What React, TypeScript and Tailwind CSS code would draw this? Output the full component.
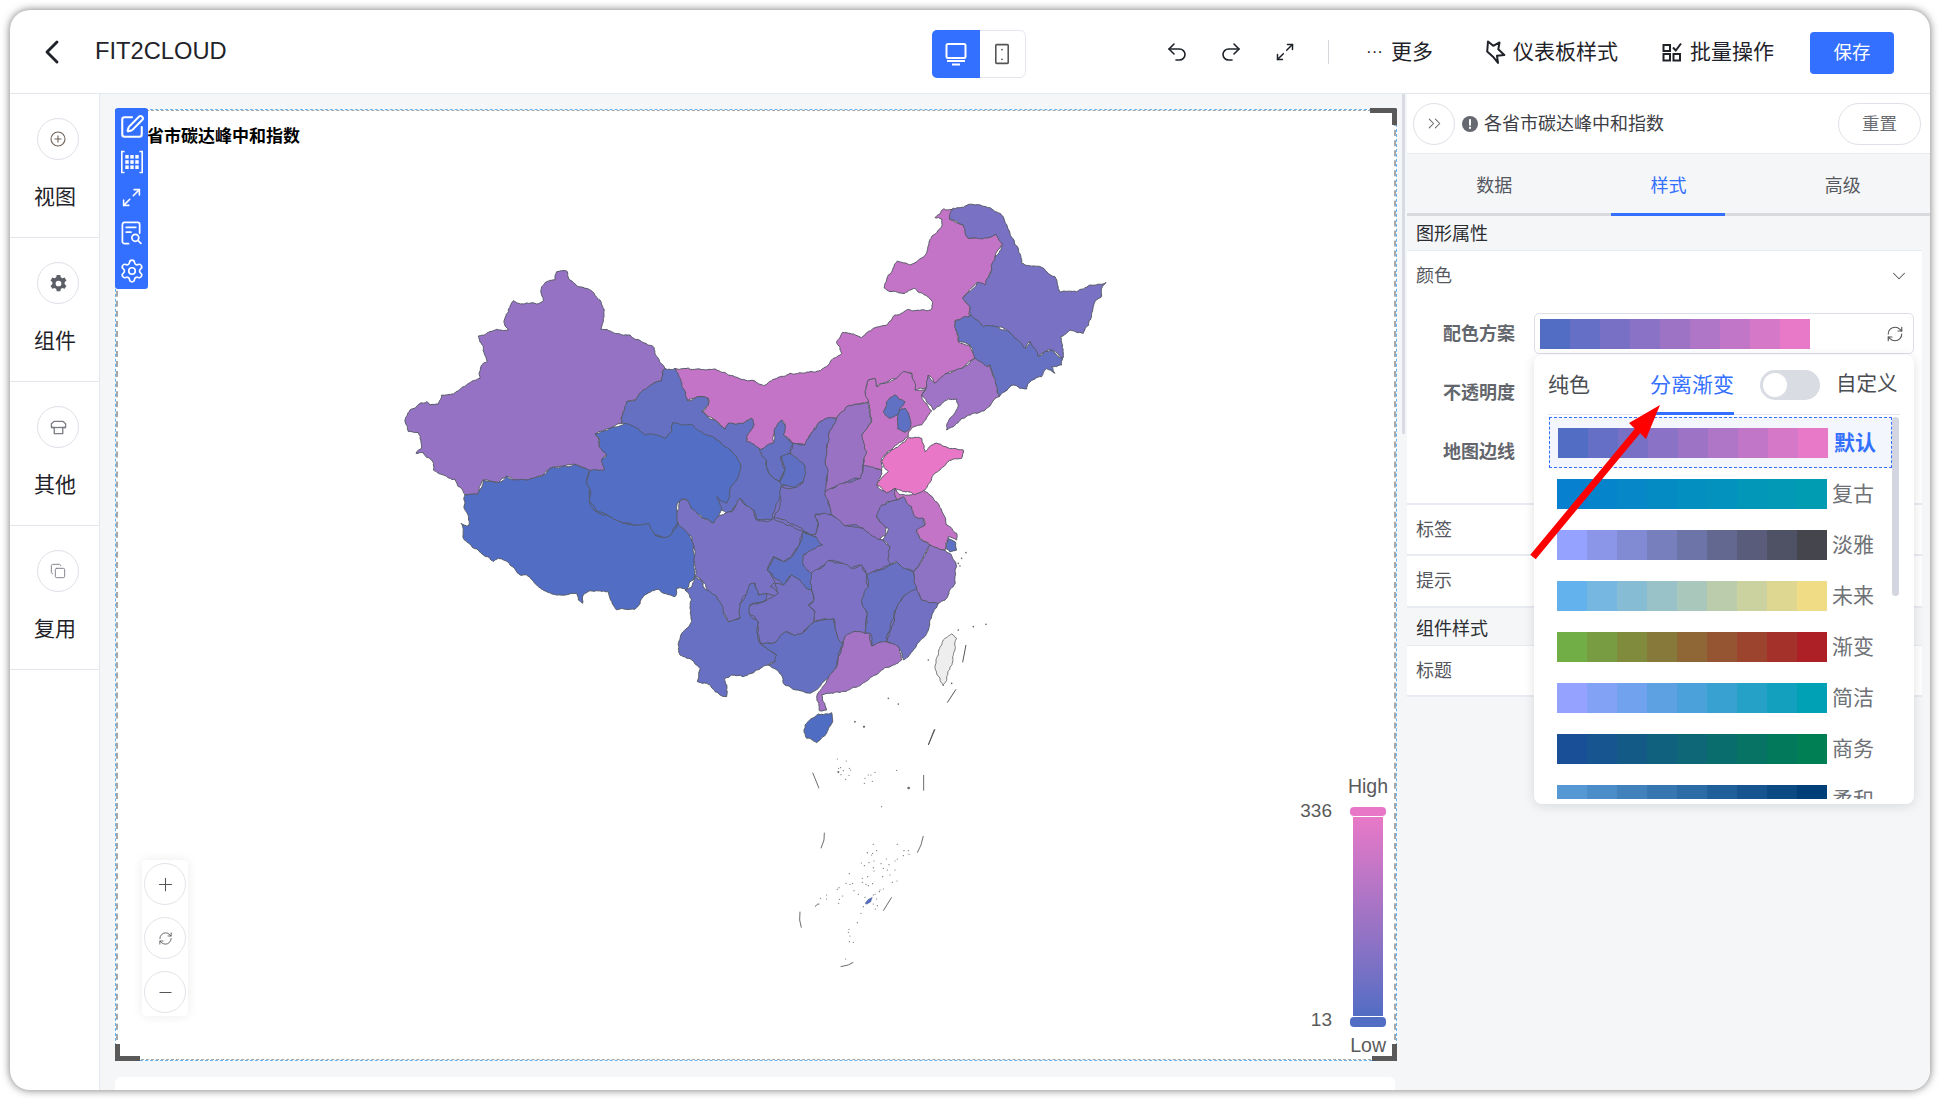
import React from "react";
import {
  ChevronDown, ChevronLeft, ChevronsRight, Copy, Maximize2, Minus, Plus, Redo2, RefreshCw, Settings, SquarePen, Undo2,
} from "lucide-react";

type Pt = [number, number];

function hash(x: number, y: number) {
  const s = Math.sin(Math.round(x) * 12.9898 + Math.round(y) * 78.233) * 43758.5453;
  return s - Math.floor(s);
}

function rec(a: Pt, b: Pt, out: Pt[]) {
  const dx = b[0] - a[0];
  const dy = b[1] - a[1];
  const len = Math.hypot(dx, dy);
  if (len < 7) {
    out.push(b);
    return;
  }
  const mx = (a[0] + b[0]) / 2;
  const my = (a[1] + b[1]) / 2;
  const k = (hash(mx, my) - 0.5) * Math.min(len * 0.25, 8);
  const m: Pt = [mx - (dy / len) * k, my + (dx / len) * k];
  rec(a, m, out);
  rec(m, b, out);
}

function wiggle(s: string) {
  const p = s.trim().split(/\s+/).map((v) => v.split(",").map(Number) as Pt);
  const out: Pt[] = [p[0]];
  for (let i = 0; i < p.length; i++) rec(p[i], p[(i + 1) % p.length], out);
  return out.map((q) => `${q[0].toFixed(1)},${q[1].toFixed(1)}`).join(" ");
}

const filler = "300,60 520,-30 620,50 650,300 700,400 800,400 800,500 700,640 500,740 330,680 150,480 110,350 200,250";
const westFiller = "520,640 600,620 640,700 800,760 860,800 870,930 700,950 520,900";
const z8: [string, string][] = [
  ["#9672c4", "470,35 500,33 510,60 530,78 555,85 578,95 600,120 613,150 610,185 603,208 640,218 690,225 725,245 760,260 775,295 795,325 787,335 785,362 755,375 725,395 708,420 680,425 665,490 630,505 585,522 597,535 598,560 620,585 605,598 613,630 570,632 530,615 490,618 450,625 430,645 385,660 340,660 320,648 295,668 250,660 232,703 195,705 175,680 165,658 130,645 100,630 95,600 70,578 48,580 65,565 55,518 25,515 15,480 30,450 60,430 80,425 90,435 115,432 125,405 160,402 190,380 240,355 245,315 262,305 250,260 235,228 290,208 325,210 313,190 340,122 370,132 410,132 430,122 425,80 435,68 465,60"],
  ["#516dc4", "195,705 232,703 250,660 295,668 320,648 340,660 385,660 430,645 450,625 490,618 530,615 570,632 560,660 570,690 568,725 590,755 625,768 660,785 700,795 745,790 765,825 790,832 812,825 832,790 855,800 880,850 885,935 880,960 870,965 860,990 830,985 825,1010 775,988 730,1010 705,1048 650,1050 630,1015 625,995 570,992 550,1005 548,1030 535,1020 530,1000 480,1005 440,995 410,975 380,945 360,945 330,915 295,895 280,905 250,885 215,860 190,835 183,790 205,798 205,770 192,740"],
];
const z8b: [string, string][] = [
  ["#526ec5", "585,522 630,505 680,490 715,505 735,525 770,525 795,535 815,515 818,488 845,495 875,492 920,525 950,540 990,570 1010,590 1022,625 1010,660 990,690 990,710 980,730 950,710 965,745 955,780 940,790 910,775 885,760 870,740 860,718 845,718 832,730 835,770 832,790 812,825 790,832 765,825 745,790 700,795 660,785 625,768 590,755 568,725 570,690 560,660 570,632 613,630 605,598 620,585 598,560 597,535"],
];
const im = "-195,520 -90,523 -35,540 0,552 45,558 70,572 110,550 150,535 210,530 250,520 280,490 305,475 290,440 308,412 330,415 365,428 400,400 440,390 465,360 500,345 575,342 578,322 555,300 525,280 495,295 450,290 432,278 445,240 472,198 510,210 555,182 580,120 605,95 605,72 585,68 610,42 640,40 628,72 670,90 685,130 745,128 768,118 788,148 765,185 755,225 735,270 712,262 668,310 690,335 688,365 645,378 655,440 690,450 705,490 665,520 620,535 585,565 565,540 558,580 525,585 515,535 490,530 470,550 410,575 405,550 385,555 375,590 385,622 340,630 320,635 290,670 240,680 210,720 195,750 160,745 130,720 135,690 125,675 105,700 100,745 60,765 20,740 20,725 42,690 35,670 10,685 -35,685 -45,703 -75,675 -115,650 -95,630 -95,610 -120,605 -158,617 -175,575";
const gansu = "15,-185 45,-185 65,-130 82,-88 120,-100 145,-95 145,-75 125,-55 165,-30 195,-2 205,-20 250,-20 275,-35 282,-15 260,20 260,35 300,57 320,90 325,125 358,155 378,110 365,75 390,75 435,105 435,155 365,170 358,205 345,238 335,270 290,270 280,240 240,205 215,245 200,250 100,150 0,60 -115,-20 -100,-85 -72,-90 -55,-115 -25,-135 5,-148 7,-175";
const z9: [string, string][] = [
  ["#7971c4", "628,72 640,40 700,28 760,45 790,65 810,115 835,160 845,205 900,215 945,245 960,292 1010,290 1050,270 1098,262 1085,280 1085,305 1065,320 1055,365 1030,415 990,405 962,425 968,490 935,465 915,470 895,485 870,440 855,460 825,430 800,405 770,395 730,395 690,360 690,335 668,310 712,262 735,270 755,225 765,185 788,148 768,118 745,128 685,130 670,90"],
  ["#6771c4", "645,378 688,365 690,360 730,395 770,395 800,405 825,430 855,460 870,440 895,485 915,470 935,465 968,490 965,510 935,515 945,535 920,520 905,545 865,565 860,582 820,570 795,590 778,605 750,510 740,515 705,490 690,450 655,440"],
  ["#9f73c5", "705,490 740,515 750,510 778,605 740,640 700,655 665,670 640,695 620,705 625,680 655,630 650,612 625,612 580,645 545,600 558,580 565,540 585,565 620,535 665,520"],
  ["#c474c6", "385,555 405,550 410,575 470,550 490,530 515,535 525,585 558,580 545,600 575,648 545,690 515,700 505,715 505,725 470,750 425,790 425,825 370,812 365,720 395,680 375,590"],
  ["#6071c4", "430,650 440,620 465,600 495,620 480,640 472,660 450,670"],
  ["#5d70c4", "478,645 495,640 510,670 510,700 495,712 472,700"],
  ["#9972c4", "290,670 320,635 385,622 395,680 365,720 380,770 367,815 362,850 310,865 255,890 262,840 255,800 265,720"],
  ["#7670c3", "240,680 275,668 290,670 265,720 255,800 262,840 255,890 275,960 225,958 235,985 225,1025 190,1005 150,985 100,970 118,940 122,875 165,878 190,860 195,815 150,775 160,745 195,750 210,720"],
  ["#6570c3", "58,765 100,745 105,700 125,675 135,690 130,720 160,745 150,775 122,785 135,825 120,860 85,830 80,800"],
  ["#5f70c4", "122,785 150,775 195,815 190,860 165,878 125,870 120,860 135,825"],
  ["#9571c4", "255,892 310,865 362,850 370,812 425,825 410,870 440,893 465,880 470,915 440,920 430,945 410,965 440,990 440,1020 420,1030 445,1060 440,1080 395,1040 370,1000 335,990 300,990 275,960 255,900"],
];
const south: [string, string][] = [
  ["#7871c4", "52,260 60,210 80,210 100,240 130,265 160,280 185,255 195,250 215,245 240,205 255,225 280,240 290,270 320,275 340,265 380,285 415,300 430,305 415,350 390,385 370,395 340,380 322,420 345,455 330,470 355,490 345,500 320,490 295,495 285,460 270,462 260,490 240,520 240,565 205,575 190,545 170,500 140,480 125,450 105,440 105,370 95,320 55,285"],
  ["#6770c3", "105,440 125,450 140,480 170,500 190,545 205,575 240,565 240,520 260,490 270,462 285,460 295,495 320,490 318,510 270,525 268,550 295,575 292,610 300,640 320,655 350,675 345,695 325,705 290,720 250,740 215,735 195,745 200,800 180,795 165,785 140,760 112,755 120,715 95,690 60,675 55,640 65,610 95,575 95,510 75,480 95,470"],
  ["#7771c4", "268,528 318,512 355,490 345,460 370,465 395,435 420,450 440,475 455,480 460,515 445,525 465,545 462,575 425,610 405,618 380,605 345,638 300,640 292,610 295,575 268,550"],
  ["#6670c3", "300,640 345,638 380,605 405,618 425,610 462,575 480,570 520,565 530,610 550,640 535,680 530,710 505,745 475,775 450,790 410,780 370,760 365,735 325,705 345,695 350,675 320,655"],
  ["#5e70c4", "430,305 470,322 488,345 430,375 430,405 455,430 457,480 440,475 420,450 395,435 370,465 345,445 322,420 340,380 370,395 390,385 415,350"],
  ["#8071c4", "465,255 490,250 515,255 545,280 580,290 610,295 640,320 668,330 690,350 690,405 620,435 605,405 575,415 545,400 505,392 495,405 455,430 430,405 430,375 488,345 470,322 430,305 465,315 475,285"],
  ["#7c71c4", "455,430 495,405 505,392 545,400 575,415 605,405 620,435 625,470 605,515 622,550 615,610 590,605 555,620 545,640 530,610 520,565 480,570 462,575 465,545 445,525 460,515"],
  ["#6870c3", "620,435 690,405 710,395 725,410 760,425 770,475 735,495 710,535 680,635 635,648 630,610 615,610 622,550 605,515 625,470"],
  ["#7170c3", "770,475 785,510 835,520 815,560 805,600 770,645 730,690 715,650 680,635 710,535 735,495"],
  ["#a473c5", "555,620 590,605 615,610 630,610 635,648 680,635 715,650 725,690 700,705 660,725 625,750 575,775 520,790 485,795 490,815 500,840 478,842 470,800 505,745 530,710 535,680 550,640"],
  ["#7f71c4", "710,210 730,200 755,230 765,260 790,265 795,285 770,300 780,325 810,345 790,385 775,410 760,425 725,410 710,395 690,405 690,350 668,330 685,295 650,260 665,225 690,215"],
  ["#8e72c4", "810,345 855,360 870,370 890,410 880,470 860,505 835,520 785,510 770,475 760,425 775,410 790,385"],
  ["#c474c6", "705,175 720,195 755,195 780,170 820,205 845,240 860,285 890,310 890,330 865,320 855,360 810,345 780,325 770,300 795,285 790,265 765,260 755,230 730,200 710,210"],
  ["#e878c7", "745,23 785,25 795,65 825,40 845,45 910,60 905,85 875,90 840,120 815,145 795,180 765,195 735,185 705,175 680,188 650,165 685,125 665,95 690,65"],
  ["#5f71c4", "865,325 885,335 890,360 870,365 857,355"],
  ["#506dc4", "435,885 475,852 515,848 518,875 500,910 470,938 440,925 432,900"],
];
const z10Lines = ["918,645 908,697", "888,778 862,818", "825,898 805,945"];
const z10Dots = [[685, 805], [715, 822], [585, 875], [612, 890], [805, 690], [875, 760], [940, 590], [978, 583], [895, 600], [905, 385], [895, 400], [900, 408], [918, 368]];
const z11Lines = ["98,218 105,235 117,265", "431,225 431,272", "133,398 132,420 123,445", "430,408 423,435 412,458", "335,592 310,632", "60,635 59,660 64,683", "182,800 205,795 220,787", "463,88 445,135", "105,620 112,613 118,612"];
const z11Dots = [[224, 66], [252, 80, 3], [172, 177], [199, 183], [176, 205], [182, 203], [208, 205], [175, 216, 3], [190, 212], [212, 210], [183, 224], [207, 226], [197, 238], [265, 225], [285, 217], [273, 225], [255, 235], [277, 244], [253, 250], [350, 211], [386, 264, 4], [305, 320], [280, 433], [352, 433], [290, 452], [278, 460], [275, 465], [262, 458], [372, 452], [385, 452], [370, 467], [387, 463], [345, 483], [352, 477], [253, 497], [244, 489], [267, 488], [282, 483], [303, 491], [319, 477], [327, 494], [310, 505], [280, 503], [282, 513], [322, 510], [345, 510], [330, 525], [308, 530], [263, 530], [208, 521], [247, 535], [247, 547], [258, 553], [265, 557], [278, 551], [337, 547], [351, 543], [177, 563], [172, 568], [198, 550], [210, 553], [218, 550], [222, 572], [235, 583], [188, 588], [140, 585], [140, 597], [122, 595], [178, 598], [176, 610], [300, 570], [310, 567], [298, 575], [285, 583], [280, 585], [255, 592], [290, 597], [280, 612], [292, 617], [286, 627], [250, 620], [243, 640], [232, 668], [207, 688], [205, 697], [210, 708], [208, 725], [220, 727], [197, 777]];

function Shape({ fill, pts }: { fill: string; pts: string }) {
  return <polygon points={wiggle(pts)} fill={fill} stroke="#555a66" strokeWidth={3} strokeLinejoin="round" />;
}

function ChinaMap() {
  const T8 = "translate(400 260) scale(0.3333)";
  const T9 = "translate(740 195) scale(0.3333)";
  const T10 = "translate(660 430) scale(0.3333)";
  const T11 = "translate(780 700) scale(0.3333)";
  return (
    <svg viewBox="400 190 720 800" className="absolute left-[284px] top-[80px] h-[800px] w-[720px]">
      <g transform={T10}>
        <polygon points={filler} fill="#7a71c4" />
      </g>
      <g transform={T8}>
        <polygon points={westFiller} fill="#516dc4" />
        {z8.map((s, i) => <Shape key={i} fill={s[0]} pts={s[1]} />)}
      </g>
      <g transform={T9}>
        <Shape fill="#c474c6" pts={im} />
      </g>
      <g transform={T10}>
        <Shape fill="#6570c3" pts={gansu} />
      </g>
      <g transform={T8}>
        {z8b.map((s, i) => <Shape key={i} fill={s[0]} pts={s[1]} />)}
      </g>
      <g transform={T9}>
        {z9.map((s, i) => <Shape key={i} fill={s[0]} pts={s[1]} />)}
      </g>
      <g transform={T10}>
        {south.map((s, i) => <Shape key={i} fill={s[0]} pts={s[1]} />)}
        <polygon points={wiggle("828,690 850,630 875,612 890,625 878,680 860,740 850,768 840,745 825,710")} fill="#eeeeee" stroke="#777777" strokeWidth={3} />
        {z10Lines.map((l, i) => <polyline key={i} points={l} fill="none" stroke="#555555" strokeWidth={3} />)}
        {z10Dots.map((d, i) => <circle key={i} cx={d[0]} cy={d[1]} r={2.5} fill="#666666" />)}
      </g>
      <g transform={T11}>
        {z11Lines.map((l, i) => <polyline key={i} points={l} fill="none" stroke="#555555" strokeWidth={2.6} />)}
        {z11Dots.map((d, i) => <circle key={i} cx={d[0]} cy={d[1]} r={d[2] ?? 1.7} fill="#666666" />)}
        <polygon points="255,610 265,598 277,592 272,606 260,613" fill="#516dc4" stroke="#555a66" strokeWidth={1} />
      </g>
    </svg>
  );
}

function lerpColors(from: number[], to: number[]) {
  return Array.from({ length: 9 }, (_, i) =>
    `rgb(${from.map((v, c) => Math.round(v + ((to[c] - v) * i) / 8)).join(",")})`,
  );
}

const DEFAULT_BAR = lerpColors([0x51, 0x6d, 0xc4], [0xe8, 0x79, 0xc8]);
const PALETTES = [
  { name: "复古", colors: lerpColors([0x07, 0x80, 0xcf], [0x00, 0x9d, 0xb2]) },
  { name: "淡雅", colors: lerpColors([0x95, 0xa2, 0xff], [0x45, 0x45, 0x4e]) },
  { name: "未来", colors: lerpColors([0x63, 0xb2, 0xee], [0xef, 0xdc, 0x85]) },
  { name: "渐变", colors: lerpColors([0x71, 0xae, 0x46], [0xac, 0x20, 0x26]) },
  { name: "简洁", colors: lerpColors([0x95, 0xa2, 0xff], [0x00, 0xa0, 0xb5]) },
  { name: "商务", colors: lerpColors([0x19, 0x4f, 0x97], [0x00, 0x7f, 0x54]) },
  { name: "柔和", colors: lerpColors([0x56, 0x98, 0xd3], [0x00, 0x3f, 0x78]) },
];

function Swatch({ colors }: { colors: string[] }) {
  return (
    <div className="flex h-[30px] w-[270px] shrink-0">
      {colors.map((c, i) => (
        <div key={i} className="h-full w-[30px]" style={{ backgroundColor: c }} />
      ))}
    </div>
  );
}

function OtherIcon() {
  return (
    <svg viewBox="0 0 18 18" className="h-[17px] w-[17px]" fill="none" stroke="#7a7d85" strokeWidth="1.4">
      <path d="M4.500 2.500h9l3 2.500v4h-3v6.500h-9V9h-3V5z" strokeLinejoin="round" />
      <path d="M1.500 9h15" />
    </svg>
  );
}

function NavItem({ label, icon }: { label: string; icon: React.ReactNode }) {
  return (
    <div className="flex h-[144px] flex-col items-start border-b border-[#e4e7ed] pt-[24px]">
      <div className="ml-[27px] flex h-[42px] w-[42px] items-center justify-center rounded-full border border-[#dfe1e8]">{icon}</div>
      <div className="ml-[24px] mt-[22px] text-[21px] leading-[30px] text-[#1f2329]">{label}</div>
    </div>
  );
}

function GridIcon() {
  return (
    <svg viewBox="0 0 24 24" className="h-[24px] w-[24px]" fill="none" stroke="white" strokeWidth="1.6">
      <path d="M4.500 1.500H1.800v21h2.700M19.500 1.500h2.700v21h-2.700" />
      <g fill="white" stroke="none">
        <rect x="5.300" y="5" width="3.400" height="3.600" /><rect x="10.300" y="5" width="3.400" height="3.600" /><rect x="15.300" y="5" width="3.400" height="3.600" />
        <rect x="5.300" y="10.200" width="3.400" height="3.600" /><rect x="10.300" y="10.200" width="3.400" height="3.600" /><rect x="15.300" y="10.200" width="3.400" height="3.600" />
        <rect x="5.300" y="15.400" width="3.400" height="3.600" /><rect x="10.300" y="15.400" width="3.400" height="3.600" /><rect x="15.300" y="15.400" width="3.400" height="3.600" />
      </g>
    </svg>
  );
}

function DocSearchIcon() {
  return (
    <svg viewBox="0 0 24 26" className="h-[25px] w-[23px]" fill="none" stroke="white" strokeWidth="1.800" strokeLinecap="round">
      <path d="M9 23.500H4.500a2 2 0 0 1-2-2v-18a2 2 0 0 1 2-2h14a2 2 0 0 1 2 2v9" />
      <path d="M6.500 6.500h10M6.500 11.500h5" />
      <circle cx="16" cy="17.500" r="3.600" />
      <path d="M18.800 20.300l3 3" />
    </svg>
  );
}

function FormRow({ label, children }: { label: string; children?: React.ReactNode }) {
  return (
    <div className="flex h-[59px] items-center">
      <div className="w-[108px] pt-[2px] text-right text-[18px] font-bold text-[#63666c]">{label}</div>
      <div className="relative ml-[19px]">{children}</div>
    </div>
  );
}

function Popover() {
  return (
    <div className="absolute left-0 top-[42px] z-20 h-[449px] w-[380px] rounded-[8px] bg-white shadow-[0_2px_12px_rgba(0,0,0,0.12)]">
      <div className="mx-[14px] flex h-[60px] items-center border-b border-[#e4e7ed]">
        <span className="text-[21px] text-[#4a4d52]">纯色</span>
        <div className="relative ml-[60px] flex h-full items-center">
          <span className="text-[21px] text-[#3370ff]">分离渐变</span>
          <div className="absolute bottom-[-1px] left-0 h-[3px] w-full bg-[#3370ff]" />
        </div>
        <div className="ml-[26px] flex h-[30px] w-[60px] items-center rounded-full bg-[#d9dce3] pl-[3px]">
          <div className="h-[24px] w-[24px] rounded-full bg-white" />
        </div>
        <span className="ml-[16px] whitespace-nowrap text-[20.5px] text-[#4a4d52]">自定义</span>
      </div>
      <div className="relative ml-[15px] mt-[2px] h-[382px] w-[350px] overflow-hidden">
        <div className="flex h-[51px] w-[343px] items-center border border-dashed border-[#3370ff] bg-[#f3f6fc] pl-[8px]">
          <Swatch colors={DEFAULT_BAR} />
          <span className="ml-[6px] text-[21px] font-bold text-[#3370ff]">默认</span>
        </div>
        {PALETTES.map((p) => (
          <div key={p.name} className="flex h-[51px] w-[343px] items-center pl-[8px]">
            <Swatch colors={p.colors} />
            <span className="ml-[5px] text-[21px] text-[#6e7176]">{p.name}</span>
          </div>
        ))}
        <div className="absolute right-0 top-0 h-[179px] w-[7px] rounded-full bg-[#d3d6e0]" />
      </div>
    </div>
  );
}

function Arrow() {
  return (
    <svg viewBox="1520 400 150 165" className="pointer-events-none absolute left-[1510px] top-[390px] z-30 h-[165px] w-[150px]">
      <polygon
        points="1530.300,554.800 1634.800,428.800 1629,423 1660,405 1646,439 1640.200,433.200 1535.700,559.200"
        fill="#ff0000"
      />
    </svg>
  );
}

function Panel() {
  return (
    <div className="flex w-[523px] flex-col bg-[#f5f6f8]">
      <div className="flex h-[60px] items-center border-b border-[#e9ebef] bg-white">
        <div className="ml-[6px] flex h-[42px] w-[42px] items-center justify-center rounded-full border border-[#dfe1e8]">
          <ChevronsRight size={21} strokeWidth={1.200} color="#666" />
        </div>
        <svg viewBox="0 0 16 16" className="ml-[7px] h-[16px] w-[16px]">
          <circle cx="8" cy="8" r="8" fill="#666a70" />
          <rect x="7" y="3.200" width="2" height="6.400" fill="white" />
          <rect x="7" y="10.800" width="2" height="2" fill="white" />
        </svg>
        <span className="ml-[6px] pt-[2px] text-[18px] text-[#3d4045]">各省市碳达峰中和指数</span>
        <div className="ml-[174px] flex h-[42px] w-[83px] items-center justify-center rounded-full border border-[#dfe1e8] pt-[2px] text-[17.500px] text-[#6a6d73]">重置</div>
      </div>
      <div className="grid h-[62px] grid-cols-3 border-b-[3px] border-[#d9dadd] text-[18px]">
        <div className="flex items-center justify-center pt-[5px] text-[#55585e]">数据</div>
        <div className="flex justify-center">
          <div className="mb-[-3px] flex w-[114px] items-center justify-center border-b-[3px] border-[#3370ff] pt-[5px] text-[#3370ff]">样式</div>
        </div>
        <div className="flex items-center justify-center pt-[5px] text-[#55585e]">高级</div>
      </div>
      <div className="flex h-[34px] items-center pl-[9px] pt-[2px] text-[18px] text-[#2b2d31]">图形属性</div>
      <div className="w-[515px] border-t border-[#e9ebf2] bg-white text-[18px] text-[#55585e]">
        <div className="flex h-[50px] items-center justify-between pl-[9px] pr-[12px]">
          <span>颜色</span>
          <ChevronDown size={22} strokeWidth={1.100} color="#555" />
        </div>
        <div className="h-[204px] border-b-2 border-[#e9ebf2] pt-[3px]">
          <FormRow label="配色方案">
            <div className="flex h-[41px] w-[380px] items-center justify-between rounded-[5px] border border-[#dcdfe6] pl-[5px] pr-[9px]">
              <Swatch colors={DEFAULT_BAR} />
              <RefreshCw size={18} strokeWidth={1.500} color="#555" />
            </div>
            <Popover />
          </FormRow>
          <FormRow label="不透明度" />
          <FormRow label="地图边线" />
        </div>
        <div className="flex h-[51px] items-center border-b-2 border-[#e9ebf2] pl-[9px] pt-[2px]">标签</div>
        <div className="flex h-[52px] items-center border-b-2 border-[#e9ebf2] pl-[9px]">提示</div>
      </div>
      <div className="flex h-[38px] w-[515px] items-center border-b border-[#e9ebf2] pl-[9px] pt-[5px] text-[18px] text-[#2b2d31]">组件样式</div>
      <div className="flex h-[51px] w-[515px] items-center border-b-2 border-[#e9ebf2] bg-white pl-[9px] pt-[1px] text-[18px] text-[#55585e]">标题</div>
    </div>
  );
}

function Widget() {
  return (
    <div className="relative h-[952px] w-[1282px] border border-dashed border-[#63b4f6] bg-white">
      <div className="h-full w-full border-x-2 border-y border-dashed border-[#a8a8a8] pl-[12px] pt-[14px]">
        <div className="text-[17px] font-bold leading-[24px] text-black">各省市碳达峰中和指数</div>
      </div>
      <ChinaMap />
      <div className="absolute left-[-1px] top-[-2px] flex h-[181px] w-[33px] flex-col items-center rounded-[3px] bg-[#3370ff] text-white">
        <SquarePen size={26} strokeWidth={1.900} className="mt-[6px]" />
        <div className="mt-[10px]"><GridIcon /></div>
        <Maximize2 size={21} strokeWidth={1.800} className="mt-[13px]" />
        <div className="mt-[13px]"><DocSearchIcon /></div>
        <Settings size={26} strokeWidth={1.500} className="mt-[12px]" />
      </div>
      <div className="absolute right-[-1px] top-[-2px] h-[17px] w-[27px] rounded-tr-[2px] border-r-[5px] border-t-[5px] border-[#595959]" />
      <div className="absolute bottom-[-1px] left-[-1px] h-[17px] w-[25px] border-b-[5px] border-l-[5px] border-[#595959]" />
      <div className="absolute bottom-[-1px] right-[-1px] h-[17px] w-[25px] border-b-[5px] border-r-[5px] border-[#595959]" />
      <div className="absolute left-[26px] top-[750px] flex h-[156px] w-[46px] flex-col items-center gap-[12px] rounded-[4px] bg-white pt-[3px] shadow-[0_0_12px_rgba(0,0,0,0.08)]">
        <div className="flex h-[42px] w-[42px] items-center justify-center rounded-full border border-[#e2e4ea]"><Plus size={21} strokeWidth={1.200} color="#555" /></div>
        <div className="flex h-[42px] w-[42px] items-center justify-center rounded-full border border-[#e2e4ea]"><RefreshCw size={15} strokeWidth={1.400} color="#555" /></div>
        <div className="flex h-[42px] w-[42px] items-center justify-center rounded-full border border-[#e2e4ea]"><Minus size={19} strokeWidth={1.500} color="#555" /></div>
      </div>
      <div className="absolute right-[8px] top-[664px] text-[19.500px] leading-[24px] text-[#5a5a5a]">High</div>
      <div className="absolute right-[64px] top-[689px] text-[19px] leading-[24px] text-[#5a5a5a]">336</div>
      <div className="absolute right-[10px] top-[697px] h-[9px] w-[36px] rounded-[4px] bg-[#e878c7]" />
      <div className="absolute right-[13px] top-[707px] h-[199px] w-[30px] bg-gradient-to-b from-[#e878c7] via-[#a073c5] to-[#516dc4]" />
      <div className="absolute right-[10px] top-[907px] h-[10px] w-[36px] rounded-[4px] bg-[#516dc4]" />
      <div className="absolute right-[64px] top-[898px] text-[19px] leading-[24px] text-[#5a5a5a]">13</div>
      <div className="absolute right-[10px] top-[923px] text-[19.500px] leading-[24px] text-[#5a5a5a]">Low</div>
    </div>
  );
}

export default function App() {
  return (
    <div className="h-[1100px] w-[1940px] bg-white pl-[10px] pt-[10px] font-['Liberation_Sans','Noto_Sans_CJK_SC',sans-serif]">
      <div className="relative flex h-[1080px] w-[1920px] flex-col overflow-hidden rounded-[20px] bg-white shadow-[0_0_9px_rgba(0,0,0,0.55)]">
        <div className="flex h-[84px] shrink-0 items-center border-b border-[#e4e7ed] text-[21px] text-[#1f2329]">
          <div className="flex w-[922px] items-center">
            <ChevronLeft size={40} strokeWidth={1.700} className="ml-[22px]" />
            <span className="ml-[23px] text-[23.700px]">FIT2CLOUD</span>
          </div>
          <div className="mt-[4px] flex h-[48px] w-[94px] rounded-[6px] border border-[#e4e7ed]">
            <div className="-m-px flex h-[48px] w-[48px] items-center justify-center rounded-l-[5px] bg-[#3370ff]">
              <svg viewBox="0 0 24 24" className="h-[24px] w-[24px]" fill="none" stroke="white" strokeWidth="2">
                <rect x="2.500" y="2" width="19" height="14" rx="1.500" />
                <path d="M3 19h18M8 22.500h8" />
              </svg>
            </div>
            <div className="flex flex-1 items-center justify-center">
              <svg viewBox="0 0 18 24" className="h-[22px] w-[16px]" fill="none" stroke="#555" strokeWidth="1.800">
                <rect x="2" y="1.500" width="14" height="21" rx="1" />
                <circle cx="9" cy="7" r="1" fill="#555" stroke="none" />
                <circle cx="9" cy="18" r="1" fill="#555" stroke="none" />
              </svg>
            </div>
          </div>
          <Undo2 size={24} strokeWidth={1.600} className="ml-[139px]" />
          <Redo2 size={24} strokeWidth={1.600} className="ml-[30px]" />
          <Maximize2 size={20} strokeWidth={1.800} className="ml-[32px]" />
          <div className="ml-[33px] h-[24px] w-px bg-[#d5d7dc]" />
          <span className="ml-[37px] w-[17px] text-[17px] leading-none">···</span>
          <span className="ml-[8px] pt-[1px]">更多</span>
          <svg viewBox="0 0 24 24" className="ml-[49px] h-[24px] w-[24px]" fill="none" stroke="#1f2329" strokeWidth="2" strokeLinejoin="round">
            <path d="M6 1.500l5.200 4.300 6.300-3.300-1.200 6.800 6 5.700-7.300.8L16 23l-5-6.300-5.800-5.200z" />
          </svg>
          <span className="ml-[7px] pt-[1px]">仪表板样式</span>
          <svg viewBox="0 0 20 20" className="ml-[44px] h-[20px] w-[20px]" fill="none" stroke="#1f2329" strokeWidth="2">
            <rect x="1.500" y="3" width="6.500" height="6" />
            <path d="M11 5.500l2.800 3L19 1.500" />
            <rect x="1.500" y="12" width="6.500" height="6.500" />
            <rect x="11.500" y="12" width="6.500" height="6.500" />
          </svg>
          <span className="ml-[8px] pt-[1px]">批量操作</span>
          <div className="ml-[36px] mt-[2px] flex h-[42px] w-[84px] items-center justify-center rounded-[4px] bg-[#3370ff] text-[18.500px] text-white">保存</div>
        </div>
        <div className="flex h-[996px]">
          <div className="w-[90px] shrink-0 border-r border-[#e4e7ed]">
            <NavItem label="视图" icon={
              <svg viewBox="0 0 16 16" className="h-[16px] w-[16px]" fill="none" stroke="#6e6259" strokeWidth="1.100">
                <circle cx="8" cy="8" r="7" /><path d="M8 4.500v7M4.500 8h7" />
              </svg>
            } />
            <NavItem label="组件" icon={
              <svg viewBox="0 0 16 16" className="h-[17px] w-[17px]" fill="#5c5f66">
                <path fillRule="evenodd" d="M6.300 0h3.400l.4 2.200 1.600.9 2.100-.8 1.700 3-1.700 1.400v1.900l1.700 1.400-1.700 3-2.100-.8-1.600.9-.4 2.200H6.300l-.4-2.200-1.600-.9-2.100.8-1.700-3 1.700-1.400V6.700L.5 5.300l1.700-3 2.100.8 1.600-.9zM8 5.300a2.700 2.700 0 1 0 0 5.400 2.700 2.700 0 0 0 0-5.400z" />
              </svg>
            } />
            <NavItem label="其他" icon={<OtherIcon />} />
            <NavItem label="复用" icon={<Copy size={16} strokeWidth={1.400} color="#7a7d85" />} />
          </div>
          <div className="w-[1302px] shrink-0 bg-[#f5f6f8] pl-[15px] pt-[15px]">
            <Widget />
            <div className="mt-[16px] h-[40px] w-[1280px] rounded-[6px] bg-white" />
          </div>
          <div className="w-[5px] shrink-0 bg-[#f5f6f8]">
            <div className="h-[340px] w-[3px] bg-[#d8dae4]" />
          </div>
          <Panel />
        </div>
        <Arrow />
      </div>
    </div>
  );
}
